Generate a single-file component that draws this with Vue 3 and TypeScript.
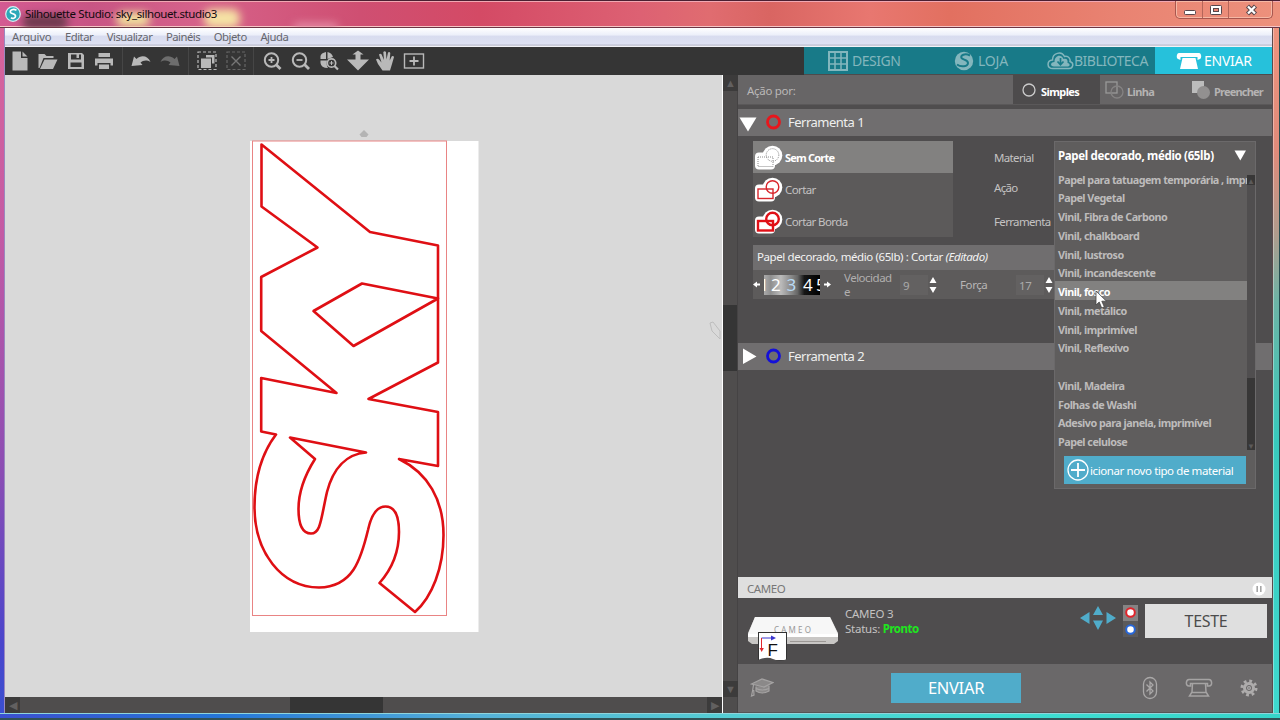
<script setup lang="ts">
import { ref } from 'vue'

const menus = ['Arquivo', 'Editar', 'Visualizar', 'Painéis', 'Objeto', 'Ajuda']

interface CutAction {
  label: string
  color: string
  weight: number
  dash?: string
}
const actions: CutAction[] = [
  { label: 'Sem Corte', color: '#8b8b8b', weight: 1, dash: '1 1' },
  { label: 'Cortar', color: '#d8262c', weight: 1.4 },
  { label: 'Cortar Borda', color: '#e01017', weight: 2.4 },
]
const selectedAction = ref(0)

const materials = [
  'Papel para tatuagem temporária , impr',
  'Papel Vegetal',
  'Vinil, Fibra de Carbono',
  'Vinil, chalkboard',
  'Vinil, lustroso',
  'Vinil, incandescente',
  'Vinil, fosco',
  'Vinil, metálico',
  'Vinil, imprimível',
  'Vinil, Reflexivo',
  '',
  'Vinil, Madeira',
  'Folhas de Washi',
  'Adesivo para janela, imprimível',
  'Papel celulose',
]
const hovered = ref(6)
</script>

<template>
  <div class="window">
    <header class="titlebar">
      <i class="glow dark"></i><i class="glow y1"></i><i class="glow y2"></i><i class="glow w1"></i>
      <svg class="logo" width="16" height="16" viewBox="0 0 16 16">
        <circle cx="8" cy="8" r="7.3" fill="#2ba9b8" stroke="#d9eef2" stroke-width="1.2" />
        <path d="M11.5 4.3C8.5 2.5 4.5 4 5.5 6.4C6.3 8.2 10.6 7.4 10.5 10.2C10.4 12.3 7.5 13 6 11.6" fill="none" stroke="#fff" stroke-width="1.7" />
      </svg>
      <span class="title">Silhouette Studio: sky_silhouet.studio3</span>
      <div class="winbtns">
        <span class="wb"><svg width="26" height="18"><rect x="8.5" y="9.5" width="11" height="4" rx="1" fill="#fff" stroke="#57474c" /></svg></span>
        <span class="wb"><svg width="26" height="18"><rect x="7.5" y="4.5" width="11" height="9" rx="1" fill="#fff" stroke="#57474c" /><rect x="10.5" y="7.5" width="5" height="3" fill="#e98573" stroke="#57474c" /></svg></span>
        <span class="wb close"><svg width="44" height="18"><path d="M18.5 5L26.5 13M26.5 5L18.5 13" stroke="#57474c" stroke-width="4.4" /><path d="M19 5.5L26 12.5M26 5.5L19 12.5" stroke="#fff" stroke-width="2.3" /></svg></span>
      </div>
    </header>

    <div class="middle">
      <div class="edge left"></div>
      <div class="app">
        <nav class="menubar">
          <span v-for="m in menus" :key="m">{{ m }}</span>
        </nav>

        <div class="toolbar">
          <div class="icons">
            <svg class="ic gap1" viewBox="0 0 28 28"><path d="M6.500 4.500H15V11H21.500V23.500H6.500Z M16.500 4.500L21.500 9.500H16.500Z" /></svg>
            <svg class="ic" viewBox="0 0 28 28"><path d="M4.500 21V7H10.500L12.500 9H19.500V11H9.500L5.500 21Z M10.500 12.500H23.500L19 22H6Z" /></svg>
            <svg class="ic" viewBox="0 0 28 28"><path fill-rule="evenodd" d="M6 6H20L22 8V22H6Z M9 7.5V12.5H19V7.5H17V11H14.5V7.5Z M8.5 15.5V20H19.5V15.5Z" /></svg>
            <svg class="ic" viewBox="0 0 28 28"><path fill-rule="evenodd" d="M8.500 6H20V10H8.500Z M5 11.500H23V18.500H20.500V16H7.500V18.500H5Z M9 17.500H19V22H9Z" /></svg>
            <i class="sep s1"></i>
            <svg class="ic" viewBox="0 0 28 28"><path d="M4.500 19L7 9.500L9.500 12C14 7.500 21 8.500 23.500 15C19.500 12.500 16 13.500 13.500 15.500L15.500 18Z" /></svg>
            <svg class="ic dim gap2" viewBox="0 0 28 28"><path d="M22.500 19L20 9.500L17.500 12C13 7.500 6 8.500 3.500 15C7.500 12.500 11 13.500 13.500 15.500L11.500 18Z" /></svg>
            <i class="sep"></i>
            <svg class="ic" viewBox="0 0 28 28"><rect x="5" y="5" width="18" height="17.500" fill="none" stroke="#b9b9b9" stroke-width="1.200" stroke-dasharray="3 2" /><path d="M13 8H21.500V16.500H19V10.500H13Z M8 11.500H18V21H8Z" /></svg>
            <svg class="ic dim gap1" viewBox="0 0 28 28"><rect x="5" y="5" width="18" height="17.500" fill="none" stroke="#666" stroke-width="1.200" stroke-dasharray="3 2" /><path d="M9.500 9.500L18.500 18.500M18.500 9.500L9.500 18.500" stroke="#777" stroke-width="1.400" /></svg>
            <i class="sep"></i>
            <svg class="ic" viewBox="0 0 28 28"><g fill="none" stroke="#b9b9b9"><circle cx="13.500" cy="13" r="6.700" stroke-width="2" /><path d="M18 17.500L22.500 22" stroke-width="2.800" /><path d="M10.500 13H16.500M13.500 10V16" stroke-width="1.800" /></g></svg>
            <svg class="ic gap1" viewBox="0 0 28 28"><g fill="none" stroke="#b9b9b9"><circle cx="12.500" cy="13" r="6.700" stroke-width="2" /><path d="M17.500 17.500L22 22" stroke-width="2.800" /><path d="M9.500 13H15.500" stroke-width="1.800" /></g></svg>
            <svg class="ic" viewBox="0 0 28 28"><path d="M5.500 12V9Q6 6 11 5V12Z M12.500 5Q17 6 18 10L12.500 12Z M5.500 13.500H12Q11 18 13 21Q6 21 5.500 16Z" /><g fill="none" stroke="#b9b9b9"><circle cx="16.500" cy="16" r="4.200" stroke-width="1.700" /><path d="M19.500 19L23 22.500" stroke-width="2.200" /><path d="M14.500 16H18.500M16.500 14V18" stroke-width="1" /></g></svg>
            <svg class="ic gap1" viewBox="0 0 28 28"><path d="M14 3.500L19.500 7.500H16.500V12.500H25L14 23.500L3 12.500H11.500V7.500H8.500Z" /></svg>
            <svg class="ic" viewBox="0 0 28 28"><path d="M10.500 23.500L6 17L4 12.500Q5.500 11 7 12.500L9.500 15.500L7 7.500Q8.300 6 9.500 7.200L12 13L11.300 5Q12.700 3.500 14 5L14.500 12.500L16 5.500Q17.500 4.500 18.300 6L17.700 13.500L19.800 9.300Q21.500 8.500 22 10L20 17L18 23.500Z" /></svg>
            <svg class="ic" viewBox="0 0 28 28"><rect x="4.500" y="7" width="19" height="14" fill="none" stroke="#b9b9b9" stroke-width="1.400" /><path d="M14 9.500V18.500M9.500 14H18.500" stroke="#b9b9b9" stroke-width="1.800" /></svg>
          </div>
          <div class="tabs">
            <div class="tab t1">
              <svg width="20" height="20" viewBox="0 0 20 20"><rect x="1" y="1" width="18" height="18" fill="none" stroke="currentColor" stroke-width="2" /><path d="M7 1V19M13 1V19M1 7H19M1 13H19" stroke="currentColor" stroke-width="1.500" /></svg>
              <span>DESIGN</span>
            </div>
            <div class="tab t2">
              <svg width="20" height="20" viewBox="0 0 20 20"><circle cx="10" cy="10" r="9.200" fill="currentColor" /><path d="M16 4.500C11 2 6 4 7.500 7C8.500 9 14 8.500 14 12C14 15.500 7 16.500 3 13.500" fill="none" stroke="#187a88" stroke-width="2" /></svg>
              <span>LOJA</span>
            </div>
            <div class="tab t3">
              <svg width="27" height="20" viewBox="0 0 27 20"><path d="M6 17.500C-.5 17.500-.5 9.500 5.500 9C5.500 2 14.500-.5 17.500 5.500C22 4.500 23.500 8.500 23 10.500C27.500 12 26 17.500 22 17.500Z" fill="none" stroke="currentColor" stroke-width="1.500" /><path d="M7 15.500C3 15.500 3 11.200 7.500 11C7.500 4.500 14 2.500 16.500 8C20 7 21 9.500 20.500 12C23.500 12.500 23 15.500 21 15.500Z" fill="currentColor" /><path d="M13.500 7V13M10.500 10.500L13.500 13.800L16.500 10.500" stroke="#187a88" fill="none" stroke-width="1.700" /></svg>
              <span>BIBLIOTECA</span>
            </div>
            <div class="tab t4">
              <svg width="26" height="18" viewBox="0 0 26 18"><path d="M3 1H23C25.500 1 26 6 24 7L21.500 8V5H4.500V8L2 7C0 6 .5 1 3 1Z M6.500 6H19.500L22 17H4Z" fill="#fff" /></svg>
              <span>ENVIAR</span>
            </div>
          </div>
        </div>

        <div class="work">
          <div class="canvas-col">
            <svg class="canvas" width="717" height="622" viewBox="5 75 717 622">
              <rect x="250" y="141" width="228.500" height="491" fill="#fff" />
              <path d="M359.500 134.500L364 130L368.500 134.500L366.500 137H361.500Z" fill="#b4b4b4" />
              <rect x="252.500" y="141" width="194" height="474.500" fill="none" stroke="#e98484" />
              <g fill="none" stroke="#df0f14" stroke-width="2.600" stroke-linejoin="round">
                <path d="M261.500 144.500L370 232L438 245.500V362.500L368.500 399L438 412V466L399 459C428 473 443.500 500 443.500 535C443.500 568 432 597 415 612L379.500 583C391 570 399 552 399 532C399 515 394 506.500 385.500 506.500C376 506.500 371 516 368 530C361 559 353 587 319 587.500C281 587 254.500 552 254.500 507C254.500 479 262 453 276 434.500L261.200 431.500V378L336.500 393L261.200 331V277L317.500 247.500L261.500 206.500Z" />
                <path d="M362 283.500L438 298.500L353.500 346L313.500 311Z" />
                <path d="M290 437.500L366 452.500C346 454 333 469 327 492C321 518 321 533.500 311 533.500C301 533.500 298.500 522 298.500 509C298.500 493 303 478 315 459Z" />
              </g>
              <path d="M710 323L713 322L720 331V339L712 331Z" fill="none" stroke="#bdbdbd" />
            </svg>
            <div class="hscroll"><i class="end">◀</i><i class="thumb"></i><i class="end">▶</i></div>
          </div>
          <div class="vscroll"><i class="end">▲</i><i class="thumb"></i><i class="end last">▼</i></div>

          <aside class="panel">
            <div class="modes">
              <div class="by">Ação por:</div>
              <div class="mode on"><svg width="14" height="14"><circle cx="7" cy="7" r="6" fill="none" stroke="#ccc" stroke-width="1.300" /></svg>Simples</div>
              <div class="mode m2"><svg width="20" height="18" viewBox="0 0 20 18"><rect x="1" y="1" width="11" height="11" fill="none" stroke="#999" stroke-width="1.300" /><circle cx="12" cy="11" r="6" fill="none" stroke="#858383" stroke-width="1.300" /></svg>Linha</div>
              <div class="mode m3"><svg width="18" height="18" viewBox="0 0 18 18"><rect width="12" height="12" fill="#bcbcbc" /><circle cx="11.500" cy="11.500" r="6.500" fill="#929090" /></svg>Preencher</div>
            </div>

            <div class="toolhead">
              <svg width="48" height="27"><path d="M1.500 8.500H18.500L10 22.500Z" fill="#fff" /><circle cx="35.500" cy="13" r="6" fill="none" stroke="#e8161c" stroke-width="2.800" /></svg>
              <span>Ferramenta 1</span>
            </div>

            <div class="toolbody">
              <div class="options">
                <div class="actions">
                  <div v-for="(a, i) in actions" :key="a.label" class="action" :class="{ sel: i === selectedAction }" @click="selectedAction = i">
                    <svg width="30" height="26" viewBox="0 0 30 26">
                      <rect x="2" y="7.500" width="20" height="17" rx="4" fill="#fff" /><circle cx="19.500" cy="10.500" r="9.800" fill="#fff" />
                      <g fill="none" :stroke="a.color" :stroke-width="a.weight" :stroke-dasharray="a.dash"><rect x="5" y="12" width="15" height="9.500" /><circle cx="19.500" cy="10" r="6.300" /></g>
                    </svg>
                    <span>{{ a.label }}</span>
                  </div>
                </div>
                <div class="labels"><span>Material</span><span>Ação</span><span>Ferramenta</span></div>
              </div>

              <div class="settings">
                <div class="shead">Papel decorado, médio (65lb) : Cortar <em>(Editado)</em></div>
                <div class="sbody">
                  <svg class="arw" width="9" height="9"><path d="M0 4.500L4 1.500V3.500H7V5.500H4V7.500Z" fill="#fff" /></svg>
                  <svg class="blade" width="56" height="20" viewBox="0 0 56 20">
                    <defs>
                      <linearGradient id="dial"><stop offset="0" stop-color="#aaa" /><stop offset=".12" stop-color="#8f8f8f" /><stop offset=".3" stop-color="#bbb" /><stop offset=".5" stop-color="#858585" /><stop offset=".6" stop-color="#666" /><stop offset=".72" stop-color="#161616" /><stop offset="1" stop-color="#000" /></linearGradient>
                    </defs>
                    <rect width="56" height="20" fill="url(#dial)" />
                    <text x="-5" y="16">1</text><text x="7" y="16">2</text><text x="22.500" y="16" class="cur">3</text><text x="39" y="16">4</text><text x="52" y="16">5</text>
                  </svg>
                  <svg class="arw r" width="9" height="9"><path d="M8 4.500L4 1.500V3.500H1V5.500H4V7.500Z" fill="#fff" /></svg>
                  <span class="vel">Velocidad<br />e</span>
                  <span class="num">9</span>
                  <svg class="spin" width="8" height="18"><path d="M4 1L7.500 7H.5Z M4 17L7.500 11H.5Z" fill="#fff" /></svg>
                  <span class="force">Força</span>
                  <span class="num n2">17</span>
                  <svg class="spin" width="8" height="18"><path d="M4 1L7.500 7H.5Z M4 17L7.500 11H.5Z" fill="#fff" /></svg>
                </div>
              </div>
            </div>

            <div class="toolhead second">
              <svg width="48" height="27"><path d="M5 5.500L18.500 13.500L5 21Z" fill="#fff" /><circle cx="35.500" cy="13" r="6" fill="none" stroke="#1410d8" stroke-width="2.800" /></svg>
              <span>Ferramenta 2</span>
            </div>
            <div class="filler"></div>

            <div class="devhead"><span>CAMEO</span>
              <svg width="14" height="14"><circle cx="7" cy="7" r="6.500" fill="#fff" /><path d="M5.200 4V10M8.800 4V10" stroke="#a5a5a5" stroke-width="1.600" /></svg>
            </div>
            <div class="device">
              <svg class="machine" width="94" height="50" viewBox="746 612 94 50">
                <path d="M755 617H830L838 633V641L834 644H752L748 641V633Z" fill="#c9c7c5" />
                <path d="M755 617H830L838 634H748Z" fill="#f7f7f7" />
                <path d="M748 634H838V637H748Z" fill="#fff" />
                <path d="M790 641.500H826" stroke="#9c9895" />
                <text class="brand" x="774" y="632.500" textLength="37">CAMEO</text>
                <rect x="758.500" y="632.500" width="28" height="28" fill="#fff" stroke="#333" />
                <path d="M758 660Q767 656 773 659Q780 662 787 659V662H758Z" fill="#4f4d4e" />
                <path d="M761.500 638H772" stroke="#3b36cf" /><path d="M771 635.500L776 638L771 640.500Z" fill="#3b36cf" />
                <path d="M761.500 638V650" stroke="#e2272b" /><path d="M759.500 648H763.800L761.700 652Z" fill="#e2272b" />
                <text class="letter" x="767.500" y="656">F</text>
              </svg>
              <div class="status"><span>CAMEO 3</span><span>Status: <b>Pronto</b></span></div>
              <svg class="pad" width="36" height="26" viewBox="0 0 36 26"><path d="M18 1L23 10H13Z M18 25L23 15.500H13Z M0 13L9.500 7V19Z M36 13L26.500 7V19Z" fill="#50acca" /></svg>
              <div class="dots"><svg width="15" height="16"><circle cx="7.500" cy="7.500" r="4.300" fill="#fff" stroke="#e1232a" stroke-width="2" /></svg><svg width="15" height="16"><circle cx="7.500" cy="8.500" r="4.300" fill="#fff" stroke="#2667db" stroke-width="2" /></svg></div>
              <div class="test">TESTE</div>
            </div>
            <footer class="foot">
              <svg class="cap" width="24" height="20" viewBox="0 0 24 20" fill="#8b8989" stroke="#a5a3a3" stroke-width="1.200"><path d="M6 8.500V13Q12 17 19 13V7.500" /><path d="M1.500 6L12 1L23 4.500L14 9Z" /><path d="M6 10.500Q12 13.500 19 10.500M3.500 7L2.500 13L1.500 18L4 17L3.700 12" fill="none" /></svg>
              <div class="send">ENVIAR</div>
              <div class="fi">
                <svg width="16" height="24" viewBox="0 0 16 24" fill="none" stroke="#aaa8a8" stroke-width="1.300"><rect x="1.500" y="1.500" width="13" height="21" rx="6.500" /><path d="M4.500 8.500L11 15L8 18V6L11 9L4.500 15.500" /></svg>
                <svg width="28" height="20" viewBox="0 0 28 20" fill="none" stroke="#a5a3a3" stroke-width="1.500"><path d="M4 1.500H24C27 1.500 28 8 24 8H22.500V5.500H5.500V8H4C0 8 1 1.500 4 1.500Z M7.500 5.500L7 14L4.500 18H23.500L21 14L20.500 5.500M7 14.500H21" /></svg>
                <svg width="18" height="18" viewBox="0 0 18 18" fill="none" stroke="#aeacac"><circle cx="9" cy="9" r="7" stroke-width="3" stroke-dasharray="2.750 2.750" /><circle cx="9" cy="9" r="4.500" stroke-width="3" /><circle cx="9" cy="9" r="1.400" stroke-width="1.200" /></svg>
              </div>
            </footer>

            <div class="dropdown">
              <div class="current"><span>Papel decorado, médio (65lb)</span><svg width="13" height="11"><path d="M.5 .5H12L6.300 10.500Z" fill="#fff" /></svg></div>
              <div class="listwrap">
                <ul>
                  <li v-for="(m, i) in materials" :key="i" :class="{ hot: i === hovered }" @mouseenter="hovered = i"><span>{{ m }}</span></li>
                </ul>
                <div class="dscroll"><i>▲</i><i class="dthumb">▼</i></div>
              </div>
              <div class="add">
                <svg width="24" height="24"><circle cx="12" cy="12" r="10" fill="none" stroke="#fff" stroke-width="1.300" /><path d="M12 5V19M5 12H19" stroke="#fff" stroke-width="1.800" /></svg>
                <span>icionar novo tipo de material</span>
              </div>
            </div>
            <svg class="cursor" width="14" height="20" viewBox="0 0 14 20"><path d="M1 1V15L4.200 12L6.700 18L9.300 16.800L6.800 11.200H11.500Z" fill="#fff" stroke="#444" stroke-width=".8" /></svg>
          </aside>
        </div>
      </div>
      <div class="edge right"></div>
    </div>
    <div class="bottom"></div>
  </div>
</template>

<style>
body { margin: 0; overflow: hidden; }
</style>

<style scoped>
.window { width: 1280px; height: 720px; display: flex; flex-direction: column; overflow: hidden; font-family: "Noto Sans", "Open Sans", sans-serif; font-size: 11.5px; line-height: 16px; color: #c4c2c2; }
.window * { box-sizing: border-box; }
i { font-style: normal; }
svg { display: block; flex: none; }
.window span { white-space: nowrap; }

.titlebar { height: 28px; flex: none; position: relative; display: flex; align-items: center; border-top: 1px solid #4b1f31; border-bottom: 1px solid #6c3544; background: linear-gradient(90deg, #d45a92 0, #c85584 90px, #d6628a 200px, #cf4f72 360px, #d44a65 480px, #dd6173 640px, #e06c70 710px, #d96562 770px, #e87770 870px, #e27060 950px, #e98372 1120px, #ed917c 1280px); box-shadow: inset 0 1px #f1a8b3, inset 0 -1px #f6c5c5; overflow: hidden; }
.glow { position: absolute; filter: blur(4px); border-radius: 8px; }
.glow.dark { left: 22px; top: 14px; width: 46px; height: 14px; background: #6a3a4c; }
.glow.y1 { left: 116px; top: 11px; width: 34px; height: 15px; background: #efdd9c; }
.glow.y2 { left: 204px; top: 8px; width: 36px; height: 19px; background: #f5e2a4; }
.glow.w1 { left: 294px; top: 22px; width: 44px; height: 8px; background: #e58ea6; }
.logo { margin-left: 5px; position: relative; }
.title { position: relative; margin-left: 4px; color: #120a0e; letter-spacing: -0.4px; }
.winbtns { margin-left: auto; margin-right: 7px; height: 18px; align-self: flex-start; display: flex; border: 1px solid #a8574f; border-top: 0; border-radius: 0 0 5px 5px; box-shadow: inset 0 0 0 1px #f5b8a5; }
.wb { width: 26px; }
.wb + .wb { border-left: 1px solid #b5665a; }
.wb.close { width: 44px; }

.middle { flex: 1; display: flex; min-height: 0; }
.edge { flex: none; }
.left { width: 5px; background: linear-gradient(#d9659b, #c45aa4 30%, #8b4db4 65%, #4a45cc 90%, #3a4fd0); border-right: 1px solid #9a88c0; }
.right { width: 8px; background: linear-gradient(#ee937d, #e08a7a 18%, #b09b8c 30%, #6cb4a6 40%, #38c9bc 60%, #3ed9cf); border-left: 1px solid #5d4a4c; box-shadow: inset 1px 0 rgba(255, 255, 255, .35), inset -1px 0 #264c4e; }
.bottom { height: 7px; flex: none; background: linear-gradient(90deg, #3b50d0, #2476d8 220px, #55b2d8 480px, #54cfd4 740px, #3edfd3 1000px, #36d5ca); border-top: 1px solid #8fd5dc; border-bottom: 2px solid #315257; }
.app { width: 1267px; display: flex; flex-direction: column; }

.menubar { height: 19px; display: flex; align-items: center; gap: 13.6px; padding: 0 7px 1px; background: linear-gradient(#fff 0, #edf0fa 35%, #d8dcef 45%, #dee1f2 85%, #aeb0c2 90%, #f2f2f7 95%); color: #65666d; font-size: 11.3px; letter-spacing: -0.5px; }
.menubar span:first-child { letter-spacing: -0.25px; }
.toolbar { height: 28px; background: #353535; display: flex; }
.icons { width: 799px; display: flex; align-items: center; }
.ic { width: 28px; height: 28px; fill: #b9b9b9; }
.ic.dim { fill: #6d6d6d; }
.gap1 { margin-left: 1px; }
.gap2 { margin-left: 2px; }
.sep { width: 1px; height: 28px; background: #464646; margin: 0 4px 0 3px; }
.sep.s1 { margin-left: 4px; }
.tabs { display: flex; flex: 1; border-bottom: 1px solid #4d4b4c; }
.tab { display: flex; align-items: center; background: #187a88; color: #83b6bd; font-size: 14px; letter-spacing: -0.5px; }
.t1 { width: 126px; padding-left: 24px; gap: 4px; }
.t2 { width: 92px; padding-left: 24px; gap: 4px; letter-spacing: -0.2px; }
.t3 { width: 133px; padding-left: 25px; gap: 0; }
.t4 { flex: 1; padding-left: 21px; gap: 2px; background: #26c1db; color: #fff; letter-spacing: -0.25px; }

.work { display: flex; height: 638px; }
.canvas-col { width: 717px; }
.canvas { background: #d9d9d9; }
.hscroll { height: 16px; background: #4f4d4d; display: flex; }
.end { display: block; width: 15px; height: 16px; background: #3c3b3b; color: #626060; font-size: 11px; text-align: center; line-height: 15px; }
.hscroll .thumb { width: 93px; margin: 0 auto 0 270px; background: #353535; }
.vscroll { width: 15px; height: 638px; margin-left: 1px; background: #4f4d4d; display: flex; flex-direction: column; border-right: 1px solid #454344; }
.vscroll .thumb { height: 66px; margin-top: 214px; background: #353535; }
.vscroll .last { margin-top: 310px; }

.panel { width: 534px; position: relative; background: #4f4d4e; display: flex; flex-direction: column; }
.modes { height: 30px; display: flex; background: #676566; border-bottom: 1px solid #5a5859; }
.by { width: 275px; padding: 8px 9px; color: #bab8b8; letter-spacing: -0.3px; }
.mode { display: flex; align-items: center; font-weight: 700; font-size: 11px; color: #b5b3b3; letter-spacing: -0.8px; padding-top: 5px; }
.mode svg { margin-top: -4px; }
.mode.on { width: 87px; padding-left: 9px; gap: 5px; background: #4d4b4c; color: #fff; letter-spacing: -0.6px; }
.m2 { width: 90px; padding-left: 5px; gap: 2px; letter-spacing: -0.6px; }
.m3 { padding-left: 2px; gap: 4px; }
.toolhead { height: 27px; margin-top: 4px; background: #706e6f; display: flex; align-items: center; color: #eee; font-size: 13px; }
.toolhead span { margin: -1px 0 0 2px; letter-spacing: -0.5px; }
.toolbody { height: 207px; padding: 5px 16px 0 15px; }
.options { display: flex; height: 104px; }
.actions { width: 200px; height: 96px; background: #5c5a5a; }
.action { height: 32px; display: flex; align-items: center; padding-top: 1px; color: #c4c2c2; letter-spacing: -0.6px; }
.action span { margin: 0 0 0 2px; }
.action.sel { background: #828180; color: #fff; font-weight: 700; font-size: 11px; letter-spacing: -0.8px; }
.labels { margin-left: 41px; padding-top: 9px; display: flex; flex-direction: column; letter-spacing: -0.65px; }
.labels span:nth-child(2) { margin-top: 14px; }
.labels span:nth-child(3) { margin-top: 18px; }
.settings { background: #5d5b5b; height: 54px; }
.shead { height: 25px; line-height: 23px; padding-left: 4px; background: #706e6f; color: #f3f3f3; letter-spacing: -0.4px; white-space: nowrap; }
.sbody { height: 29px; display: flex; align-items: center; }
.blade { margin-left: 2px; font-size: 17px; fill: #fff; }
.blade .cur { fill: #b8daf5; }
.arw.r { margin-left: 3px; }
.vel { line-height: 14.5px; margin: 1px 0 0 12px; width: 54px; color: #b1afaf; letter-spacing: -0.5px; }
.num { width: 28px; height: 20px; line-height: 21px; margin-left: 2px; padding-left: 3px; background: #636161; color: #aaa; }
.spin { margin-left: 1px; }
.force { margin-left: 23px; width: 33px; color: #b8b6b6; letter-spacing: -0.4px; }
.num.n2 { margin-left: 23px; letter-spacing: -0.3px; }
.second { margin-top: 0; }
.filler { flex: 1; }
.devhead { height: 21px; background: #dfdfdf; color: #777; display: flex; align-items: center; justify-content: space-between; padding: 2px 6px 0 9px; letter-spacing: -0.4px; }
.device { height: 66px; display: flex; align-items: flex-start; }
.machine { margin: 14px 0 0 8px; }
.brand { font-size: 8px; fill: #999; }
.letter { font-size: 17px; fill: #111; font-family: "Liberation Sans", sans-serif; }
.status { margin: 8px 0 0 5px; width: 235px; display: flex; flex-direction: column; line-height: 15px; letter-spacing: -0.25px; }
.status b { color: #1ee61e; font-size: 11.5px; letter-spacing: -0.5px; }
.pad { margin-top: 7px; }
.dots { margin: 7px 0 0 7px; background: #5c5a5b; }
.dots svg:first-child { background: #858383; }
.test { width: 122px; height: 34px; margin: 6px 0 0 7px; background: #dfdfdf; color: #4c4c4c; font-size: 16px; line-height: 34px; text-align: center; letter-spacing: -0.3px; }
.foot { height: 49px; background: #6a6869; display: flex; align-items: center; border-bottom: 1px solid #555; }
.cap { margin-left: 12px; }
.send { width: 130px; height: 30px; margin-left: 117px; background: #50acca; color: #fff; font-size: 16.5px; line-height: 30px; text-align: center; letter-spacing: -0.3px; }
.fi { display: flex; align-items: center; gap: 27px; margin-left: 121px; }

.dropdown { position: absolute; left: 316px; top: 66px; width: 202px; height: 348px; background: #5f5d5d; border: 1px solid #6b696a; display: flex; flex-direction: column; }
.current { height: 33px; display: flex; justify-content: space-between; align-items: center; padding: 0 8px 6px 3px; color: #fff; font-weight: 700; letter-spacing: -0.33px; }
.listwrap { height: 275px; display: flex; overflow: hidden; }
ul { width: 192px; margin: -6.5px 0 0; padding: 0; list-style: none; }
li { height: 18.75px; line-height: 22px; padding-left: 3px; font-size: 10.8px; font-weight: 700; letter-spacing: -0.52px; color: #bdbbbb; white-space: nowrap; }
li.hot { background: #828180; color: #fff; }
.dscroll { width: 8px; background: #504e4f; display: flex; flex-direction: column; justify-content: space-between; }
.dscroll i { display: flex; align-items: flex-end; height: 10px; background: #383737; color: #5c5a5a; font-size: 8px; line-height: 9px; }
.dscroll .dthumb { height: 72px; }
.add { width: 182px; height: 28px; margin: 6px 0 0 9px; background: #50acca; color: #fff; display: flex; align-items: center; letter-spacing: -0.4px; }
.add svg { margin-left: 2px; }
.add span { margin-top: 2px; }
.cursor { position: absolute; left: 357px; top: 215px; }
</style>
